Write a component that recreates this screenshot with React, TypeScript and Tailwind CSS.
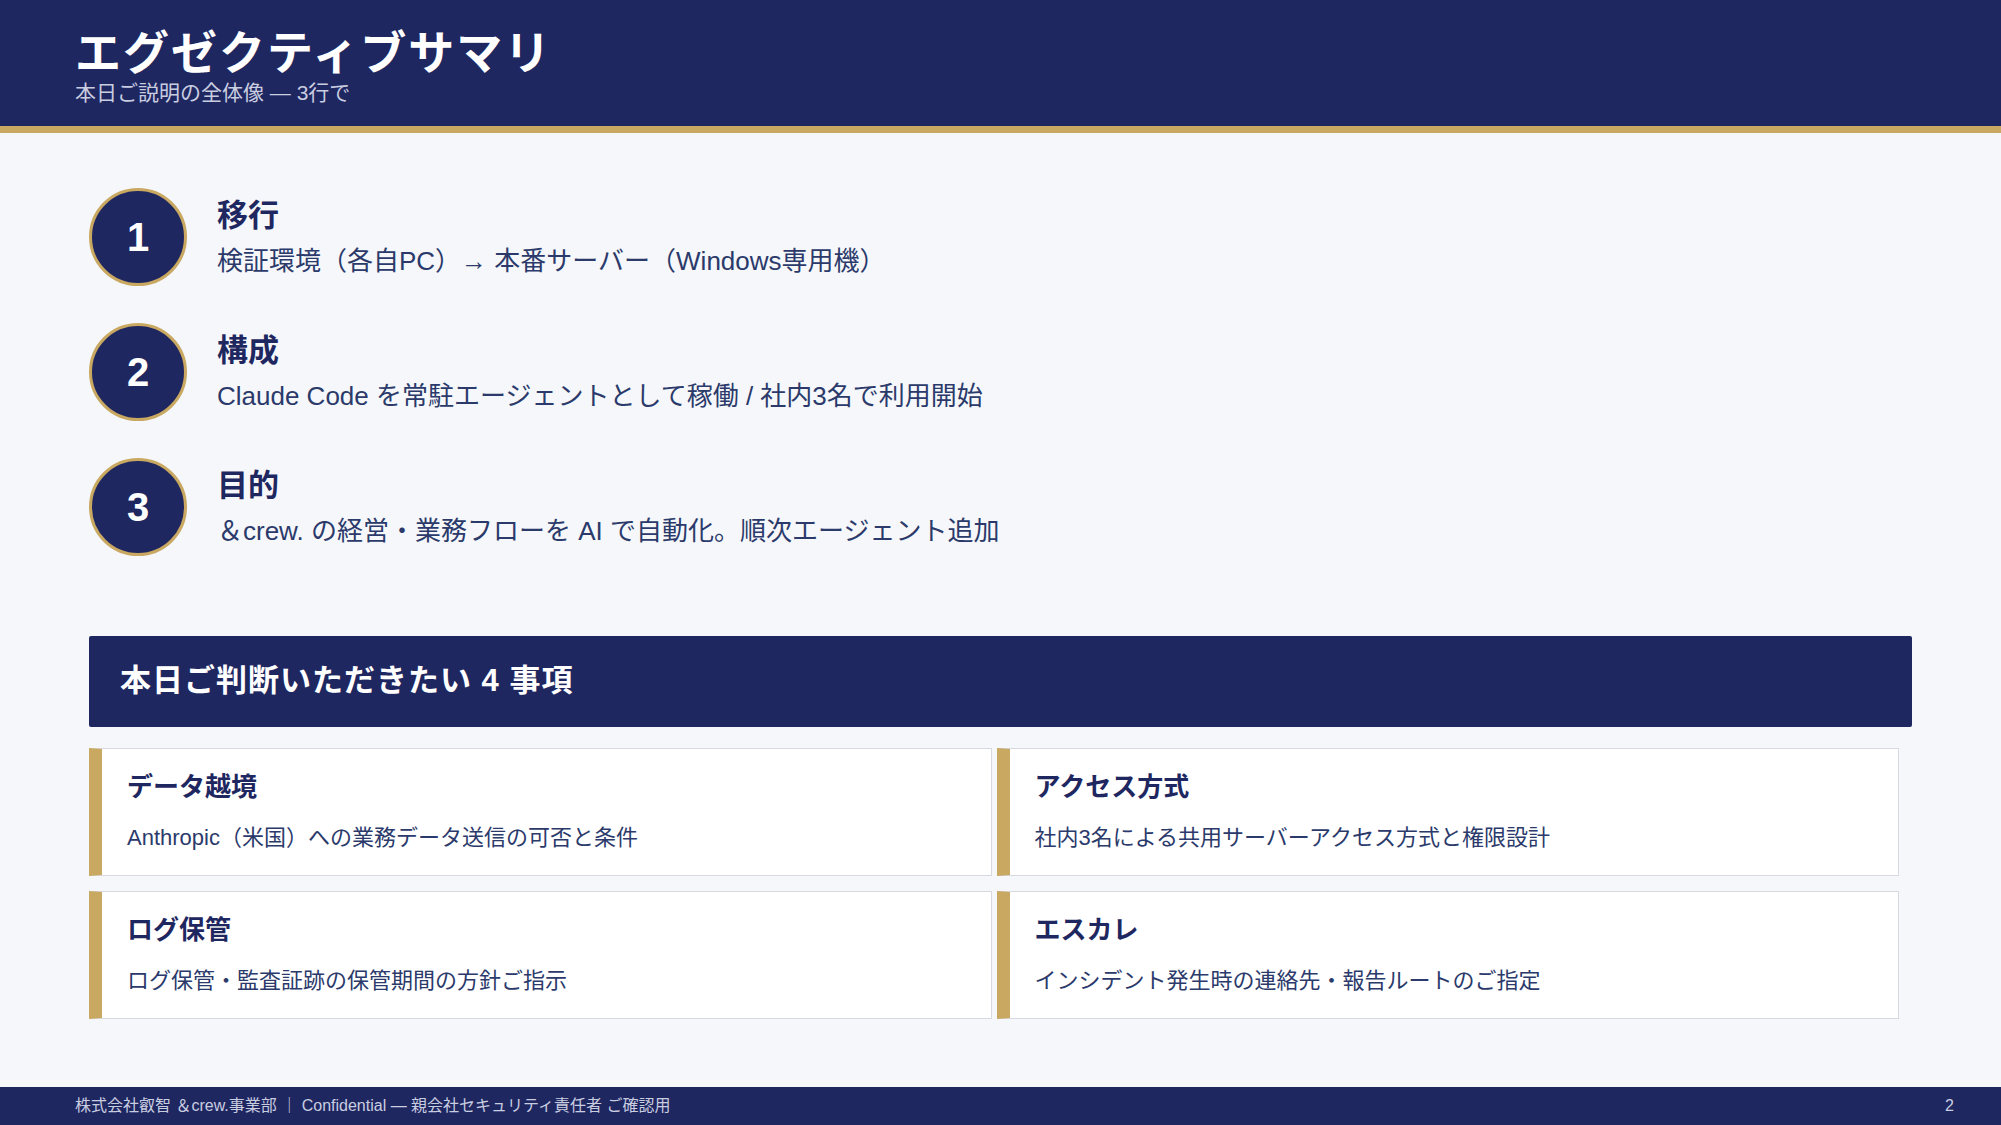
import React from "react";

const font = { fontFamily: '"Liberation Sans", "Noto Sans CJK JP", sans-serif' };

const items = [
  { n: "1", h: "移行", d: "検証環境（各自PC）→ 本番サーバー（Windows専用機）" },
  { n: "2", h: "構成", d: "Claude Code を常駐エージェントとして稼働 / 社内3名で利用開始" },
  { n: "3", h: "目的", d: "＆crew. の経営・業務フローを AI で自動化。順次エージェント追加" },
];

const cards = [
  { h: "データ越境", d: "Anthropic（米国）への業務データ送信の可否と条件" },
  { h: "アクセス方式", d: "社内3名による共用サーバーアクセス方式と権限設計" },
  { h: "ログ保管", d: "ログ保管・監査証跡の保管期間の方針ご指示" },
  { h: "エスカレ", d: "インシデント発生時の連絡先・報告ルートのご指定" },
];

export default function App() {
  return (
    <div style={font} className="w-[2001px] h-[1125px] bg-[#f5f7fa] flex flex-col overflow-hidden">
      <header className="h-[126px] bg-[#1f2761] px-[75px] pt-[26px] flex flex-col shrink-0">
        <h1 className="text-white text-[46px] font-bold leading-[54px] tracking-[2px]">エグゼクティブサマリ</h1>
        <p className="text-[#c9cde0] text-[21px] leading-[26px]">本日ご説明の全体像 — 3行で</p>
      </header>
      <div className="h-[7px] bg-[#c9a862] shrink-0" />
      <main className="flex-1 flex flex-col px-[89px]">
        <div className="flex flex-col gap-[37px] pt-[55px]">
          {items.map((it) => (
            <div key={it.n} className="flex items-center gap-[30px]">
              <div className="w-[98px] h-[98px] rounded-full bg-[#1f2761] border-[3px] border-[#c9a862] flex items-center justify-center text-white text-[40px] font-bold shrink-0">
                {it.n}
              </div>
              <div className="flex flex-col gap-[10px]">
                <div className="text-[#1f2761] text-[31px] font-bold leading-[38px]">{it.h}</div>
                <div className="text-[#2b3a6b] text-[26px] leading-[32px]">{it.d}</div>
              </div>
            </div>
          ))}
        </div>
        <div className="mt-[80px] h-[91px] bg-[#1f2761] flex items-center px-[31px] rounded-[2px]">
          <span className="text-white text-[31px] font-bold tracking-[1px]">本日ご判断いただきたい 4 事項</span>
        </div>
        <div className="mt-[21px] grid grid-cols-2 gap-x-[5px] gap-y-[15px] w-[1810px]">
          {cards.map((c) => (
            <div key={c.h} className="h-[128px] bg-white border border-[#d6d9e0] border-l-[13px] border-l-[#c9a862] flex flex-col justify-center pl-[25px] gap-[22px]">
              <div className="text-[#1f2761] text-[26px] font-bold leading-[30px]">{c.h}</div>
              <div className="text-[#2b3a6b] text-[22px] leading-[28px]">{c.d}</div>
            </div>
          ))}
        </div>
      </main>
      <footer className="h-[38px] bg-[#1f2761] flex items-center justify-between px-[75px] shrink-0">
        <span className="text-[#c9cde0] text-[16px]">株式会社叡智 ＆crew.事業部 ｜ Confidential — 親会社セキュリティ責任者 ご確認用</span>
        <span className="text-[#c9cde0] text-[16px] pr-[0px] mr-[-28px]">2</span>
      </footer>
    </div>
  );
}
